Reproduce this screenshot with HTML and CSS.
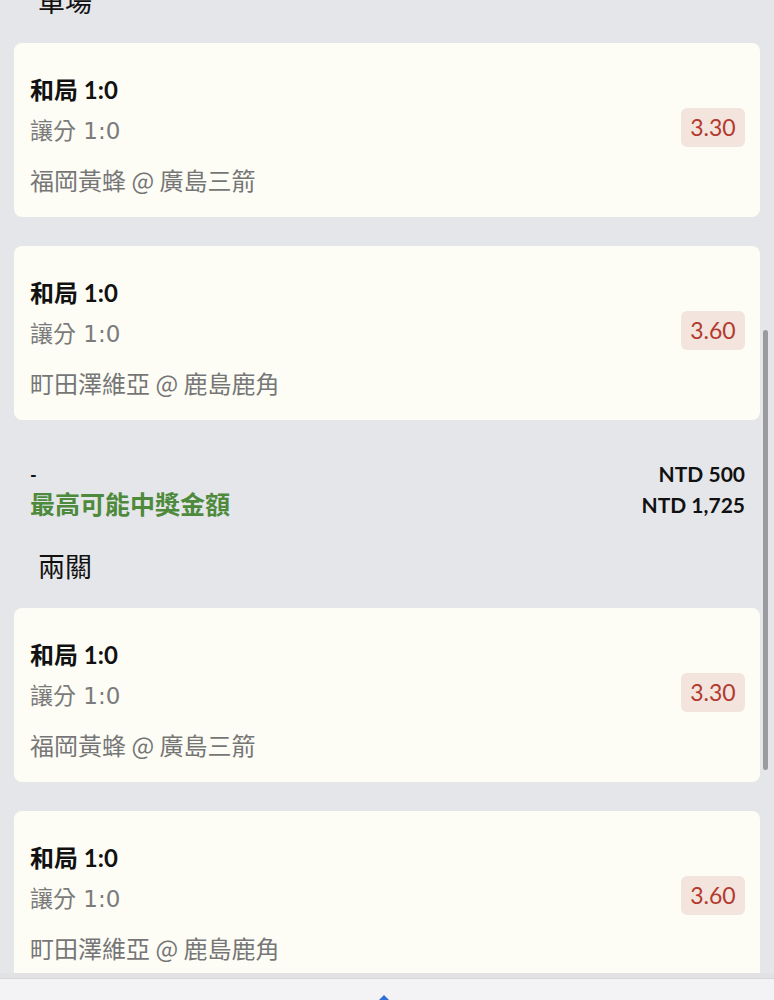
FILE: index.html
```html
<!DOCTYPE html>
<html lang="zh-Hant">
<head>
<meta charset="utf-8">
<title>投注單</title>
<link rel="stylesheet" href="styles.css">
</head>
<body>
<main class="slip">
  <h2 class="group-title first">單場</h2>
  <div class="bet-card">
    <div class="bet-info">
      <div class="bet-pick">和局 1:0</div>
      <div class="bet-market">讓分 1:0</div>
      <div class="bet-match">福岡黃蜂 @ 廣島三箭</div>
    </div>
    <div class="odds">3.30</div>
  </div>
  <div class="bet-card">
    <div class="bet-info">
      <div class="bet-pick">和局 1:0</div>
      <div class="bet-market">讓分 1:0</div>
      <div class="bet-match">町田澤維亞 @ 鹿島鹿角</div>
    </div>
    <div class="odds">3.60</div>
  </div>

  <div class="summary">
    <div class="sum-label dash">-</div>
    <div class="sum-value">NTD 500</div>
    <div class="sum-label win">最高可能中獎金額</div>
    <div class="sum-value">NTD 1,725</div>
  </div>

  <h2 class="group-title">兩關</h2>
  <div class="bet-card">
    <div class="bet-info">
      <div class="bet-pick">和局 1:0</div>
      <div class="bet-market">讓分 1:0</div>
      <div class="bet-match">福岡黃蜂 @ 廣島三箭</div>
    </div>
    <div class="odds">3.30</div>
  </div>
  <div class="bet-card">
    <div class="bet-info">
      <div class="bet-pick">和局 1:0</div>
      <div class="bet-market">讓分 1:0</div>
      <div class="bet-match">町田澤維亞 @ 鹿島鹿角</div>
    </div>
    <div class="odds">3.60</div>
  </div>
</main>

<div class="scrollbar"></div>

<nav class="bottom-bar">
  <svg class="nav-icon" width="14" height="14" viewBox="0 0 14 14"><path d="M7 1 L12 6 L12 14 L2 14 L2 6 Z" fill="#2f6fd6"/></svg>
</nav>
</body>
</html>
```

FILE: styles.css
```css
html, body {
  margin: 0;
  padding: 0;
  height: 100%;
  overflow: hidden;
}
body {
  background: #e5e6ea;
  font-family: Lato, "Noto Sans CJK TC", sans-serif;
  color: #111;
}
.slip {
  display: flex;
  flex-direction: column;
  padding: 0 14px;
}
.group-title {
  margin: 27px 0 24px;
  padding-left: 24px;
  font-size: 27px;
  line-height: 36px;
  font-weight: 400;
  color: #111;
  font-family: "Noto Sans CJK TC", sans-serif;
}
.group-title.first {
  margin-top: -17px;
}
.bet-card {
  background: #fdfdf6;
  border-radius: 8px;
  display: flex;
  align-items: center;
  justify-content: space-between;
  padding: 32px 15px 22px 16px;
  margin-bottom: 29px;
}
.bet-card:last-child {
  margin-bottom: 0;
}
.bet-info {
  display: flex;
  flex-direction: column;
}
.bet-pick {
  font-size: 24px;
  line-height: 30px;
  font-weight: 700;
  color: #111;
  margin-bottom: 11px;
}
.bet-market {
  font-size: 23px;
  line-height: 30px;
  color: #7b7b7b;
  font-family: "DejaVu Sans", "Noto Sans CJK TC", sans-serif;
  margin-bottom: 19px;
}
.bet-match {
  font-size: 24px;
  line-height: 30px;
  color: #767676;
  font-family: "Noto Sans CJK TC", sans-serif;
}
.odds {
  width: 64px;
  height: 39px;
  margin-top: -16px;
  border-radius: 6px;
  background: #f3e4dd;
  color: #b23a2f;
  font-size: 23px;
  line-height: 39px;
  text-align: center;
}
.summary {
  display: grid;
  grid-template-columns: 1fr auto;
  margin: 10px 0 0;
  padding: 0 15px 0 16px;
  line-height: 29px;
}
.sum-label.dash {
  font-weight: 700;
  font-size: 18px;
  line-height: 25px;
  padding-top: 4px;
}
.sum-label.win {
  color: #4e8a3b;
  font-weight: 700;
  font-size: 25px;
  line-height: 33px;
}
.sum-value {
  text-align: right;
  font-weight: 700;
  font-size: 21px;
  color: #111;
  align-self: center;
}
.scrollbar {
  position: fixed;
  left: 763px;
  top: 330px;
  width: 5px;
  height: 440px;
  border-radius: 3px;
  background: #9b9b9f;
}
.bottom-bar {
  position: fixed;
  left: 0;
  right: 0;
  bottom: 0;
  height: 21px;
  background: #f3f3f5;
  border-top: 1px solid #d6d6da;
  box-shadow: 0 -5px 0 #e2e2e5;
  display: flex;
  justify-content: center;
}
.nav-icon {
  margin-top: 15px;
  margin-left: -6px;
}
```
